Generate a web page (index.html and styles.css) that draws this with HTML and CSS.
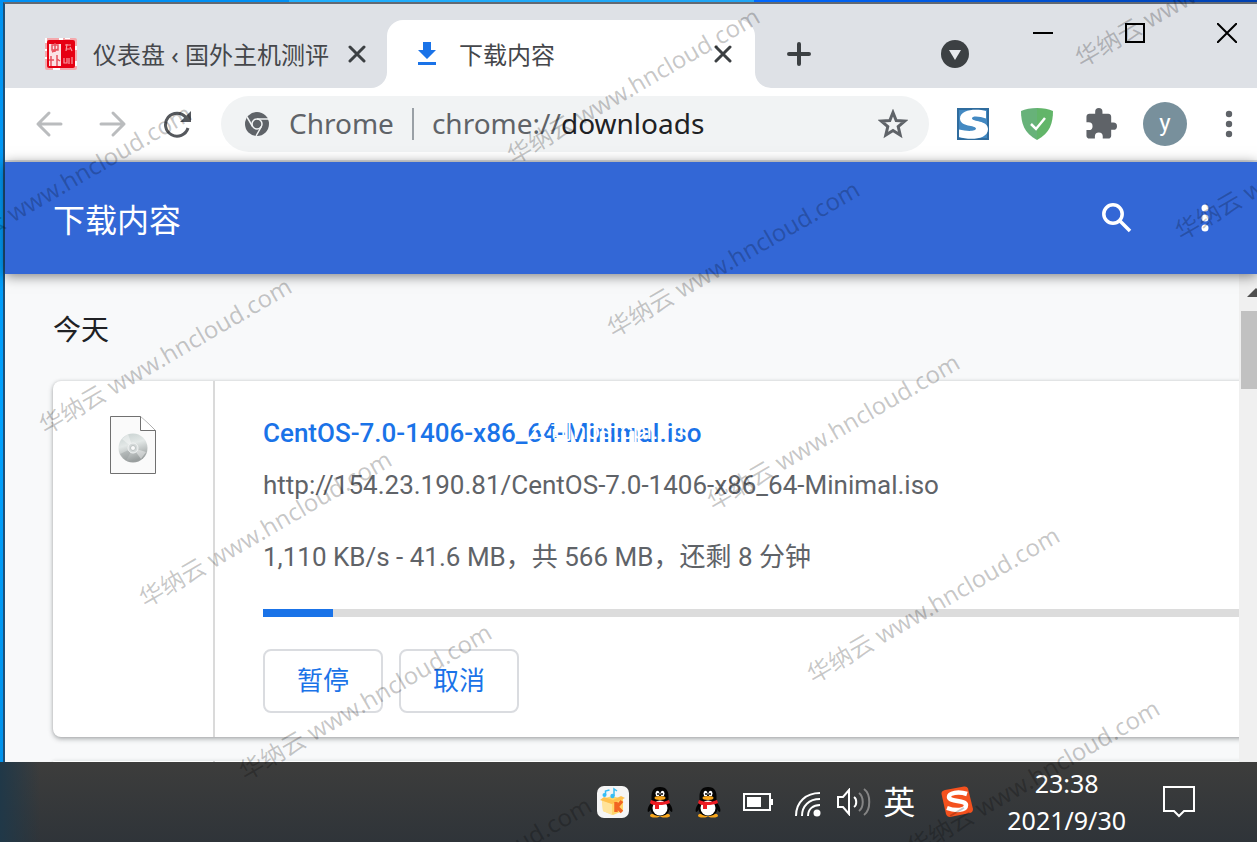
FILE: index.html
```html
<!DOCTYPE html>
<html lang="zh-CN">
<head>
<meta charset="utf-8">
<title>下载内容</title>
<link rel="stylesheet" href="styles.css">
</head>
<body>
<div class="desktop">
  <div class="wallpaper"></div>
  <div class="browser">
    <header class="tabstrip">
      <div class="tab tab-idle">
        <svg class="favicon" width="32" height="32" viewBox="0 0 32 32">
          <rect width="32" height="32" rx="2" fill="#f5a9ad"/>
          <rect x="2" y="2" width="28" height="28" rx="2" fill="#e60012"/>
          <path d="M4 6h12v22H4z" fill="#fbe3e4"/>
          <path d="M7 7h6v5H7zM10 5v9M7 14l6-3M6 18v10M4 22h5M12 17v11M12 21l3 2" fill="none" stroke="#e8525c" stroke-width="1.500"/>
          <path d="M20 7h6M21 11h4M22 6l-1 7M25 9l2 4M19 20v5h3v-5M24 20v6M27 19v7" fill="none" stroke="#f79ba1" stroke-width="1.200"/>
          <path d="M1 0v5M0 12h2M0 20h2M8 31h7M20 0h5M31 8v4M31 23v5M14 1h4" stroke="#fff" stroke-width="2"/>
        </svg>
        <span class="tab-title">仪表盘 ‹ 国外主机测评</span>
        <button class="tab-close" aria-label="关闭"><svg width="18" height="18" viewBox="0 0 18 18"><path d="M2 2l14 14M16 2L2 16" stroke="#3c4043" stroke-width="3" stroke-linecap="round"/></svg></button>
      </div>
      <div class="tab tab-active">
        <svg class="dl" width="20" height="24" viewBox="0 0 20 24"><path d="M6 0h8v8h5l-9 9-9-9h5zM1 20h18v3H1z" fill="#1a73e8"/></svg>
        <span class="tab-title">下载内容</span>
        <button class="tab-close" aria-label="关闭"><svg width="18" height="18" viewBox="0 0 18 18"><path d="M2 2l14 14M16 2L2 16" stroke="#3c4043" stroke-width="3" stroke-linecap="round"/></svg></button>
      </div>
      <div class="strip-rest">
        <button class="new-tab" aria-label="新标签页"><svg width="24" height="24" viewBox="0 0 24 24"><path d="M12 2v20M2 12h20" stroke="#3c4043" stroke-width="4" stroke-linecap="round"/></svg></button>
        <button class="tab-search" aria-label="搜索标签页"><svg width="28" height="28" viewBox="0 0 28 28"><circle cx="14" cy="14" r="14" fill="#3c4043"/><path d="M8 10h12l-6 10z" fill="#e8eaed"/></svg></button>
        <div class="window-buttons">
          <button aria-label="最小化"><svg width="20" height="20" viewBox="0 0 20 20"><path d="M0 10h20" stroke="#000" stroke-width="2"/></svg></button>
          <button aria-label="最大化"><svg width="20" height="20" viewBox="0 0 20 20"><path d="M1 1h18v18H1z" fill="none" stroke="#000" stroke-width="2"/></svg></button>
          <button aria-label="关闭窗口"><svg width="20" height="20" viewBox="0 0 20 20"><path d="M0 0l20 20M20 0L0 20" stroke="#000" stroke-width="2"/></svg></button>
        </div>
      </div>
    </header>
    <nav class="toolbar">
      <div class="nav-buttons">
        <button aria-label="后退"><svg width="28" height="28" viewBox="0 0 28 28"><path d="M14 3L3 14l11 11M3 14h23" fill="none" stroke="#babcbe" stroke-width="3" stroke-linecap="round" stroke-linejoin="round"/></svg></button>
        <button aria-label="前进"><svg width="28" height="28" viewBox="0 0 28 28"><path d="M14 3l11 11-11 11M25 14H2" fill="none" stroke="#babcbe" stroke-width="3" stroke-linecap="round" stroke-linejoin="round"/></svg></button>
        <button aria-label="重新加载"><svg width="28" height="28" viewBox="0 0 28 28"><path d="M23 7.500A11.500 11.500 0 1 0 25 18" fill="none" stroke="#55585d" stroke-width="3"/><path d="M28 1v11H17z" fill="#55585d"/></svg></button>
      </div>
      <div class="omnibox">
        <svg width="24" height="24" viewBox="0 0 24 24"><circle cx="12" cy="12" r="12" fill="#5f6368"/><circle cx="12" cy="12" r="5" fill="none" stroke="#f1f3f4" stroke-width="1.500"/><path d="M12 7h12M7.600 14.500L2 5M16.400 14.500L11 24" stroke="#f1f3f4" stroke-width="1.500"/></svg>
        <span class="chip">Chrome</span>
        <span class="divider"></span>
        <span class="url">chrome://<b>downloads</b></span>
        <button class="star" aria-label="收藏"><svg width="30" height="30" viewBox="0 0 30 30"><path d="M15 3.500l3.200 8 8.500.6-6.500 5.500 2 8.400-7.200-4.500L7.800 26l2-8.400-6.500-5.500 8.500-.6z" fill="none" stroke="#5f6368" stroke-width="3"/></svg></button>
      </div>
      <div class="extensions">
        <button aria-label="S"><svg width="32" height="32" viewBox="0 0 32 32"><rect x="1" y="1" width="30" height="30" fill="#4389c2" stroke="#2f6c9e" stroke-width="2"/><path d="M29 3C20 .500 3 1 3 10.500 3 19 19 17 19 20.500c0 3-9 3-17 1V29c9 3 29 3.500 29-8 0-9-16-7-16-10.500 0-3 8-2 14 0z" fill="#fff"/></svg></button>
        <button aria-label="AdGuard"><svg width="32" height="32" viewBox="0 0 32 32"><path d="M16 0C10 0 4 1 0 3c0 12 3 22 16 29z" fill="#67b279"/><path d="M16 0c6 0 12 1 16 3 0 12-3 22-16 29z" fill="#62b569"/><path d="M10 16l5 5L24 10" fill="none" stroke="#fff" stroke-width="2.500"/></svg></button>
        <button aria-label="扩展程序"><svg width="32" height="32" viewBox="1 1 22 22"><path d="M20.500 11H19V7c0-1.100-.9-2-2-2h-4V3.500a2.500 2.500 0 0 0-5 0V5H4c-1.100 0-2 .9-2 2v3.800h1.500a2.700 2.700 0 0 1 0 5.400H2V20c0 1.100.9 2 2 2h3.800v-1.500a2.700 2.700 0 0 1 5.400 0V22H17c1.100 0 2-.9 2-2v-4h1.500a2.500 2.500 0 0 0 0-5z" fill="#5f6368"/></svg></button>
        <button class="avatar" aria-label="用户">y</button>
        <button class="menu" aria-label="菜单"><svg width="8" height="28" viewBox="0 0 8 28"><g fill="#5f6368"><circle cx="4" cy="4" r="3.200"/><circle cx="4" cy="14" r="3.200"/><circle cx="4" cy="24" r="3.200"/></g></svg></button>
      </div>
    </nav>
    <div class="page-header">
      <h1>下载内容</h1>
      <button aria-label="搜索"><svg width="30" height="30" viewBox="0 0 30 30"><circle cx="11" cy="11" r="9.200" fill="none" stroke="#fff" stroke-width="3.500"/><path d="M18 18l10 10" stroke="#fff" stroke-width="3.500"/></svg></button>
      <button aria-label="更多操作"><svg width="8" height="28" viewBox="0 0 8 28"><g fill="#fff"><circle cx="4" cy="4" r="3.500"/><circle cx="4" cy="14" r="3.500"/><circle cx="4" cy="24" r="3.500"/></g></svg></button>
    </div>
    <div class="page">
      <main class="downloads">
        <h2>今天</h2>
        <article class="card">
          <div class="file-icon">
            <svg width="46" height="58" viewBox="0 0 46 58">
              <defs><linearGradient id="disc" x1="0" y1="0" x2="0.300" y2="1"><stop offset="0" stop-color="#c5cfce"/><stop offset=".45" stop-color="#e3e8e7"/><stop offset="1" stop-color="#9a9f9f"/></linearGradient></defs>
              <path d="M.5.500h30l15 14v43H.5z" fill="#fafafa" stroke="#707070"/><path d="M30.500.500v14h15" fill="#fff" stroke="#707070"/>
              <circle cx="23" cy="32" r="14.500" fill="url(#disc)"/><path d="M23 32L12 23l6-5zM23 32l13 4-5 7z" fill="#fff" opacity=".4"/><path d="M23 32l-13 6 6 7z" fill="#8e9696" opacity=".35"/><circle cx="23" cy="32" r="5" fill="#d4d9d9" stroke="#f2f4f4"/><circle cx="23" cy="32" r="2.500" fill="#fafafa" stroke="#bcc2c2"/>
            </svg>
          </div>
          <div class="details">
            <div class="name-row"><a class="file-name" href="#">CentOS-7.0-1406-x86_64-Minimal.iso</a><span class="stamp" aria-hidden="true">公司hostcpi.inf</span></div>
            <a class="file-url" href="#">http://154.23.190.81/CentOS-7.0-1406-x86_64-Minimal.iso</a>
            <p class="status">1,110 KB/s - 41.6 MB，共 566 MB，还剩 8 分钟</p>
            <div class="progress" role="progressbar" aria-label="下载进度" aria-valuenow="7"><div class="bar" style="width:7%"></div></div>
            <div class="actions"><button>暂停</button><button>取消</button></div>
          </div>
        </article>
        <article class="card next"><div class="file-icon"></div></article>
      </main>
      <div class="scrollbar"><svg width="18" height="9" viewBox="0 0 18 9"><path d="M9 0l9 9H0z" fill="#505050"/></svg><div class="thumb"></div></div>
    </div>
  </div>
  <footer class="taskbar">
    <svg class="music" width="32" height="32" viewBox="0 0 32 32"><rect width="32" height="32" rx="7" fill="#f5f5f5"/><path d="M5 13l10-3 11 3v12l-10 4-10-4z" fill="#ffd56a"/><path d="M5 14l10 4v11l-9-4z" fill="#ffe39a"/><path d="M3 14l12 4 13-6-4-2-8 4-9-3z" fill="#ffc04d"/><path d="M19 16v10M25 15l-5 6 5 5" fill="none" stroke="#f26522" stroke-width="3.500"/><path d="M8.500 9V5l4-1M17 10V3l3 2" fill="none" stroke="#38bdf4" stroke-width="1.500"/><circle cx="7.500" cy="9" r="2" fill="#38bdf4"/><circle cx="15.500" cy="10" r="2.200" fill="#38bdf4"/></svg>
    <svg width="26" height="32" viewBox="0 0 26 32"><use href="#penguin"/></svg>
    <svg width="26" height="32" viewBox="0 0 26 32"><g id="penguin"><path d="M4 17c-3 3-4 7-3 9 1 0 2-1 3-3zM22 17c3 3 4 7 3 9-1 0-2-1-3-3z" fill="#050505"/><ellipse cx="8" cy="29.500" rx="5" ry="2" fill="#f7a51b"/><ellipse cx="18" cy="29.500" rx="5" ry="2" fill="#f7a51b"/><path d="M13 1C6 1 4.500 6 4.500 10v5c-3 9 0 15 8.500 15s11.500-6 8.500-15v-5C21.500 6 20 1 13 1z" fill="#050505"/><ellipse cx="13" cy="22" rx="7.500" ry="7.500" fill="#fff"/><ellipse cx="10.500" cy="7.500" rx="2" ry="2.700" fill="#fff"/><ellipse cx="15.500" cy="7.500" rx="2" ry="2.700" fill="#fff"/><circle cx="11" cy="8" r="1"/><circle cx="15" cy="8" r="1"/><ellipse cx="13" cy="12" rx="5.500" ry="1.900" fill="#f7a51b"/><path d="M4 14c6 2.500 12 2.500 18 0l1 3c-3 1.500-7 2-11 2V23H8v-4c-2 0-4-1-5-2z" fill="#ed1c24"/></g></svg>
    <svg width="30" height="18" viewBox="0 0 30 18"><path d="M1 1h26v16H1z" fill="none" stroke="#fff" stroke-width="2"/><path d="M4 4h14v10H4zM28 6h2v6h-2z" fill="#fff"/></svg>
    <svg class="wifi" width="26" height="26" viewBox="0 0 26 26"><g fill="none" stroke="#fff" stroke-width="2"><path d="M1 25C1 11 11 2 25 2"/><path d="M7 25C7 15 14 8 25 8"/><path d="M13 25c0-7 5-11 12-11"/></g><circle cx="22" cy="22" r="3.500" fill="#fff"/></svg>
    <svg class="volume" width="34" height="28" viewBox="0 0 34 28"><path d="M1 9h5l6-7v24l-6-7H1z" fill="none" stroke="#fff" stroke-width="2"/><path d="M17 9c3 2 3 8 0 10" fill="none" stroke="#fff" stroke-width="2"/><path d="M22 5c5 4 5 14 0 18M27 1c7 5 7 21 0 26" fill="none" stroke="#858585" stroke-width="2"/></svg>
    <span class="ime">英</span>
    <svg class="sogou" width="32" height="32" viewBox="0 0 32 32"><path d="M4 4L23 .500q3-.5 4 2L32 23q0 3-3 4L9 31q-3 0-4-3L.500 8Q0 5 4 4z" fill="#f4511e"/><path d="M26 8C17 5 8 7 8 11c0 5 17 3 17 8 0 6-11 6-19 3" fill="none" stroke="#fff" stroke-width="4.500"/></svg>
    <div class="clock"><span>23:38</span><span>2021/9/30</span></div>
    <svg class="notice" width="32" height="32" viewBox="0 0 32 32"><path d="M1 1h30v24H21l-5 5-5-5H1z" fill="none" stroke="#fff" stroke-width="2"/></svg>
  </footer>
  <div class="watermarks" aria-hidden="true">
    <span class="wm a1">华纳云 www.hncloud.com</span><span class="wm a2">华纳云 www.hncloud.com</span><span class="wm a3">华纳云 www.hncloud.com</span><span class="wm a4">华纳云 www.hncloud.com</span><span class="wm a5">华纳云 www.hncloud.com</span>
    <span class="wm b1">华纳云 www.hncloud.com</span><span class="wm b2">华纳云 www.hncloud.com</span><span class="wm b3">华纳云 www.hncloud.com</span><span class="wm b4">华纳云 www.hncloud.com</span><span class="wm b5">华纳云 www.hncloud.com</span>
    <span class="wm c1">华纳云 www.hncloud.com</span><span class="wm c2">华纳云 www.hncloud.com</span>
  </div>
</div>
</body>
</html>
```

FILE: styles.css
```css
* { box-sizing: border-box; }
body { margin: 0; font-family: "Noto Sans", "Noto Sans CJK SC", sans-serif; }
button { border: 0; padding: 0; background: none; font: inherit; display: flex; align-items: center; justify-content: center; }
svg { display: block; flex: none; }
a { text-decoration: none; }
.desktop { position: relative; min-height: 100vh; display: flex; flex-direction: column; overflow: hidden; background: linear-gradient(180deg, #0092f0, #00a2ff 50%, #008fe8); }
.wallpaper { height: 2px; background: linear-gradient(90deg, #0090f5 23%, #20b0ff 23%, #20a5f5 60%, #0068ff 60%, #0040b0); }
.browser { flex: 1; display: flex; flex-direction: column; margin-left: 3px; border-left: 2px solid #1d5078; border-top: 2px solid #636972; background: #fff; }

.tabstrip { height: 84px; display: flex; background: #fff; }
.tab { display: flex; align-items: center; }
.tab-idle { width: 382px; padding: 16px 19px 0 40px; background: #dee1e6; border-bottom-right-radius: 16px; }
.tab-active { width: 368px; padding: 16px 21px 0 30px; background: linear-gradient(#dee1e6, #dee1e6) top / 100% 32px no-repeat; position: relative; }
.tab-active::before { content: ""; position: absolute; inset: 16px 0 0; background: #fff; border-radius: 16px 16px 0 0; }
.tab-active > * { position: relative; }
.tab-title { flex: 1; padding-top: 2px; font-size: 24px; line-height: 32px; color: #45474b; white-space: nowrap; }
.favicon { margin-right: 16px; }
.dl { margin-right: 22px; }
.tab-close { width: 22px; height: 24px; }
.strip-rest { flex: 1; display: flex; padding-left: 32px; background: #dee1e6; border-bottom-left-radius: 16px; }
.new-tab { width: 24px; margin-top: 16px; }
.tab-search { width: 28px; margin: 16px auto 0 130px; }
.window-buttons { display: flex; gap: 72px; padding: 19px 20px 0 0; align-items: flex-start; }

.toolbar { height: 74px; display: flex; align-items: center; border-bottom: 2px solid #dcdee0; padding: 0 24px 0 30px; }
.nav-buttons { display: flex; gap: 36px; margin-right: 30px; }
.omnibox { flex: 1; height: 56px; display: flex; align-items: center; padding: 0 21px 0 24px; border-radius: 28px; background: #f1f3f4; font-size: 28px; line-height: 38px; color: #5f6368; }
.chip { margin-left: 20px; padding-bottom: 2px; }
.divider { width: 2px; height: 32px; margin: 0 18px; background: #9aa0a6; }
.url { flex: 1; padding-bottom: 2px; }
.url b { font-weight: 400; color: #202124; }
.extensions { display: flex; align-items: center; gap: 32px; margin-left: 28px; }
.avatar { width: 44px; height: 44px; margin-left: -6px; padding-bottom: 2px; border-radius: 50%; background: #78909c; color: #fff; font: 24px Roboto, sans-serif; }
.menu { width: 8px; margin-left: 6px; }

.page-header { position: relative; z-index: 1; height: 112px; display: flex; align-items: center; gap: 69px; padding: 0 48px; background: #3367d6; box-shadow: 0 2px 12px rgba(0, 0, 0, .5); color: #fff; }
.page-header h1 { flex: 1; margin: 0; padding-top: 4px; font-size: 32px; line-height: 48px; font-weight: 400; }
.page { flex: 1; display: flex; background: #f8f9fa; }
.downloads { flex: 1; min-width: 0; padding-left: 48px; overflow: hidden; font-family: Roboto, "Noto Sans CJK SC", sans-serif; }
.downloads h2 { margin: 35px 0 29px; font-size: 28px; line-height: 43px; font-weight: 400; color: #202124; }
.card { display: flex; min-height: 356px; margin-right: -20px; border-radius: 8px; background: #fff; box-shadow: 0 2px 5px rgba(60, 64, 67, .4), 0 0 3px rgba(60, 64, 67, .15); }
.card.next { min-height: 0; height: 1px; margin-top: 24px; border-radius: 8px 8px 0 0; }
.file-icon { width: 162px; border-right: 2px solid #dadada; display: flex; justify-content: center; align-items: flex-start; padding-top: 35px; }
.next .file-icon { padding: 0; }
.details { flex: 1; padding: 35px 0 24px 48px; font-size: 26px; line-height: 34px; color: #5f6368; }
.name-row { position: relative; }
.file-name { color: #1a73e8; font-weight: 500; }
.stamp { position: absolute; left: 262px; top: 0; color: #fff; font-size: 24px; line-height: 30px; white-space: nowrap; }
.file-url { display: block; margin-top: 18px; color: #5f6368; }
.status { margin: 38px 0 35px; }
.progress { height: 8px; background: #dcdcdc; }
.bar { height: 8px; background: #1a73e8; }
.actions { display: flex; gap: 16px; margin-top: 32px; }
.actions button { width: 120px; height: 64px; border: 2px solid #dadce0; border-radius: 8px; color: #1a73e8; font-size: 26px; }
.scrollbar { width: 18px; padding-top: 14px; background: #f0f0f0; overflow: hidden; }
.scrollbar svg { margin-left: 8px; }
.thumb { height: 78px; margin: 14px 0 0 2px; background: #c1c1c1; }

.taskbar { height: 80px; display: flex; align-items: center; justify-content: flex-end; padding-right: 62px; color: #fff; background: linear-gradient(90deg, #203848, rgba(32, 56, 72, 0) 40px), linear-gradient(#3d3d3c, #2f3439); }
.taskbar svg { margin-right: 22px; }
.taskbar .music { margin-right: 18px; }
.taskbar .wifi { margin: 4px 16px 0 0; }
.taskbar .volume { margin-right: 12px; }
.ime { font-size: 32px; line-height: 40px; margin-right: 26px; }
.taskbar .sogou { margin-right: 34px; }
.clock { display: flex; flex-direction: column; align-items: center; font-size: 25px; line-height: 37px; margin-right: 37px; }
.taskbar .notice { margin-right: 0; }

.watermarks { position: absolute; inset: 0; z-index: 5; overflow: hidden; pointer-events: none; }
.wm { position: absolute; font-size: 24px; line-height: 32px; white-space: nowrap; color: rgba(0, 0, 0, .22); transform: rotate(-30deg); transform-origin: 0 100%; }
.a1 { left: -51px; top: 236px; } .a2 { left: 49px; top: 409px; } .a3 { left: 149px; top: 582px; } .a4 { left: 249px; top: 755px; } .a5 { left: 349px; top: 928px; }
.b1 { left: 517px; top: 139px; } .b2 { left: 617px; top: 312px; } .b3 { left: 717px; top: 485px; } .b4 { left: 817px; top: 658px; } .b5 { left: 917px; top: 831px; }
.c1 { left: 1085px; top: 42px; } .c2 { left: 1185px; top: 215px; }
```
